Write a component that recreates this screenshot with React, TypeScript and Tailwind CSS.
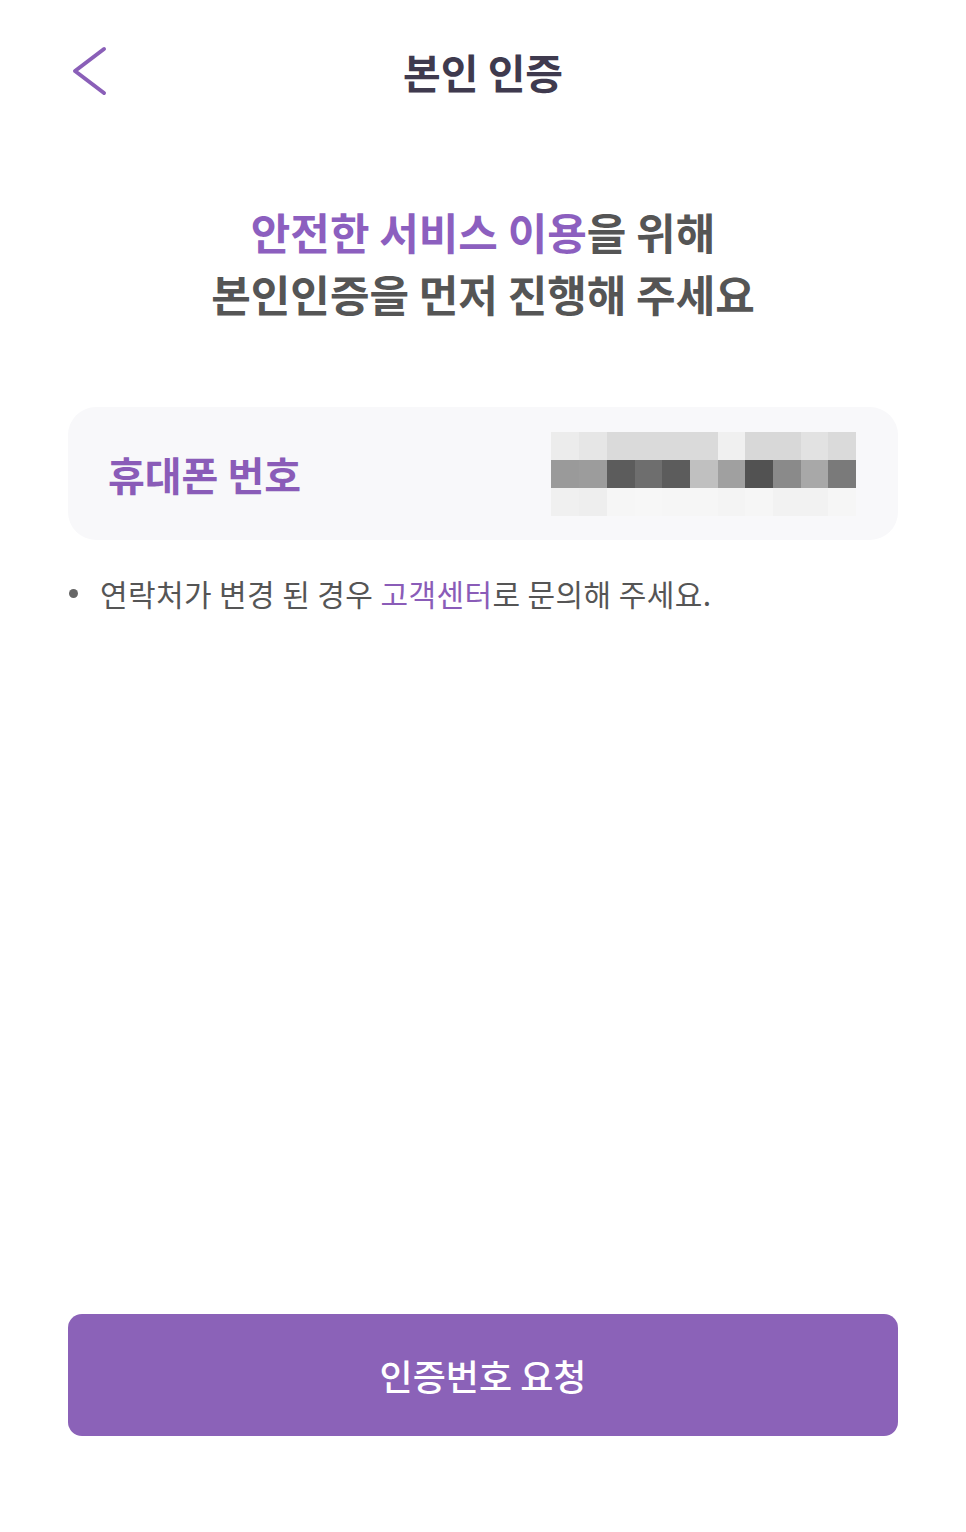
import React from "react";

const topRow = ["#ececec", "#e6e6e6", "#dadada", "#dadada", "#dadada", "#dadada", "#f0f0f0", "#d8d8d8", "#d8d8d8", "#e2e2e2", "#dadada"];
const midRow = ["#9a9a9a", "#9c9c9c", "#5c5c5c", "#6e6e6e", "#5c5c5c", "#c0c0c0", "#a0a0a0", "#525252", "#8a8a8a", "#a8a8a8", "#7a7a7a"];
const botRow = ["#f0f0f0", "#eeeeee", "#f6f6f6", "#f7f7f7", "#f6f6f6", "#f6f6f6", "#f4f4f4", "#f6f6f6", "#f2f2f2", "#f2f2f2", "#f6f6f6"];

function Pixelated() {
  const rows = [topRow, midRow, botRow];
  return (
    <div className="flex flex-col">
      {rows.map((row, r) => (
        <div key={r} className="flex">
          {row.map((c, i) => (
            <div key={i} className="w-[27.7px] h-[28px]" style={{ backgroundColor: c }} />
          ))}
        </div>
      ))}
    </div>
  );
}

export default function App() {
  return (
    <div
      className="w-full h-[1532px] bg-white flex flex-col px-[68px]"
      style={{ fontFamily: '"Noto Sans CJK KR", "Noto Sans", sans-serif' }}
    >
      {/* Header */}
      <div className="h-[142px] grid grid-cols-[1fr_auto_1fr] items-center">
        <div className="pl-[3px] flex items-center">
          <svg width="36" height="50" viewBox="0 0 36 50" fill="none">
            <path d="M33 3 L4 25 L33 47" stroke="#8a5fb8" strokeWidth="4" strokeLinecap="round" strokeLinejoin="round" />
          </svg>
        </div>
        <h1 className="text-[41px] font-bold text-[#3f3a4e] leading-none">본인 인증</h1>
        <div />
      </div>

      {/* Headline */}
      <div className="mt-[58px] text-center text-[43px] leading-[62px] font-bold text-[#555555]">
        <p>
          <span className="text-[#8c5fbf]">안전한 서비스 이용</span>을 위해
        </p>
        <p>본인인증을 먼저 진행해 주세요</p>
      </div>

      {/* Card */}
      <div className="mt-[83px] h-[133px] rounded-[28px] bg-[#f8f8fa] flex items-center justify-between pl-[40px] pr-[42px]">
        <span className="text-[40px] font-bold text-[#8a5cb8] leading-none">휴대폰 번호</span>
        <Pixelated />
      </div>

      {/* Notice */}
      <div className="mt-[35px] flex items-center h-[36px]">
        <span className="w-[9px] h-[9px] rounded-full bg-[#666666] ml-[1px] mr-[22px]" />
        <p className="text-[30px] text-[#555555] leading-[36px] tracking-[0.4px]">
          연락처가 변경 된 경우 <span className="text-[#8a5cb8]">고객센터</span>로 문의해 주세요.
        </p>
      </div>

      <div className="flex-1" />

      {/* Button */}
      <button className="h-[122px] w-full rounded-[14px] bg-[#8b62b8] text-white text-[36px] font-medium mb-[96px]">
        인증번호 요청
      </button>
    </div>
  );
}
